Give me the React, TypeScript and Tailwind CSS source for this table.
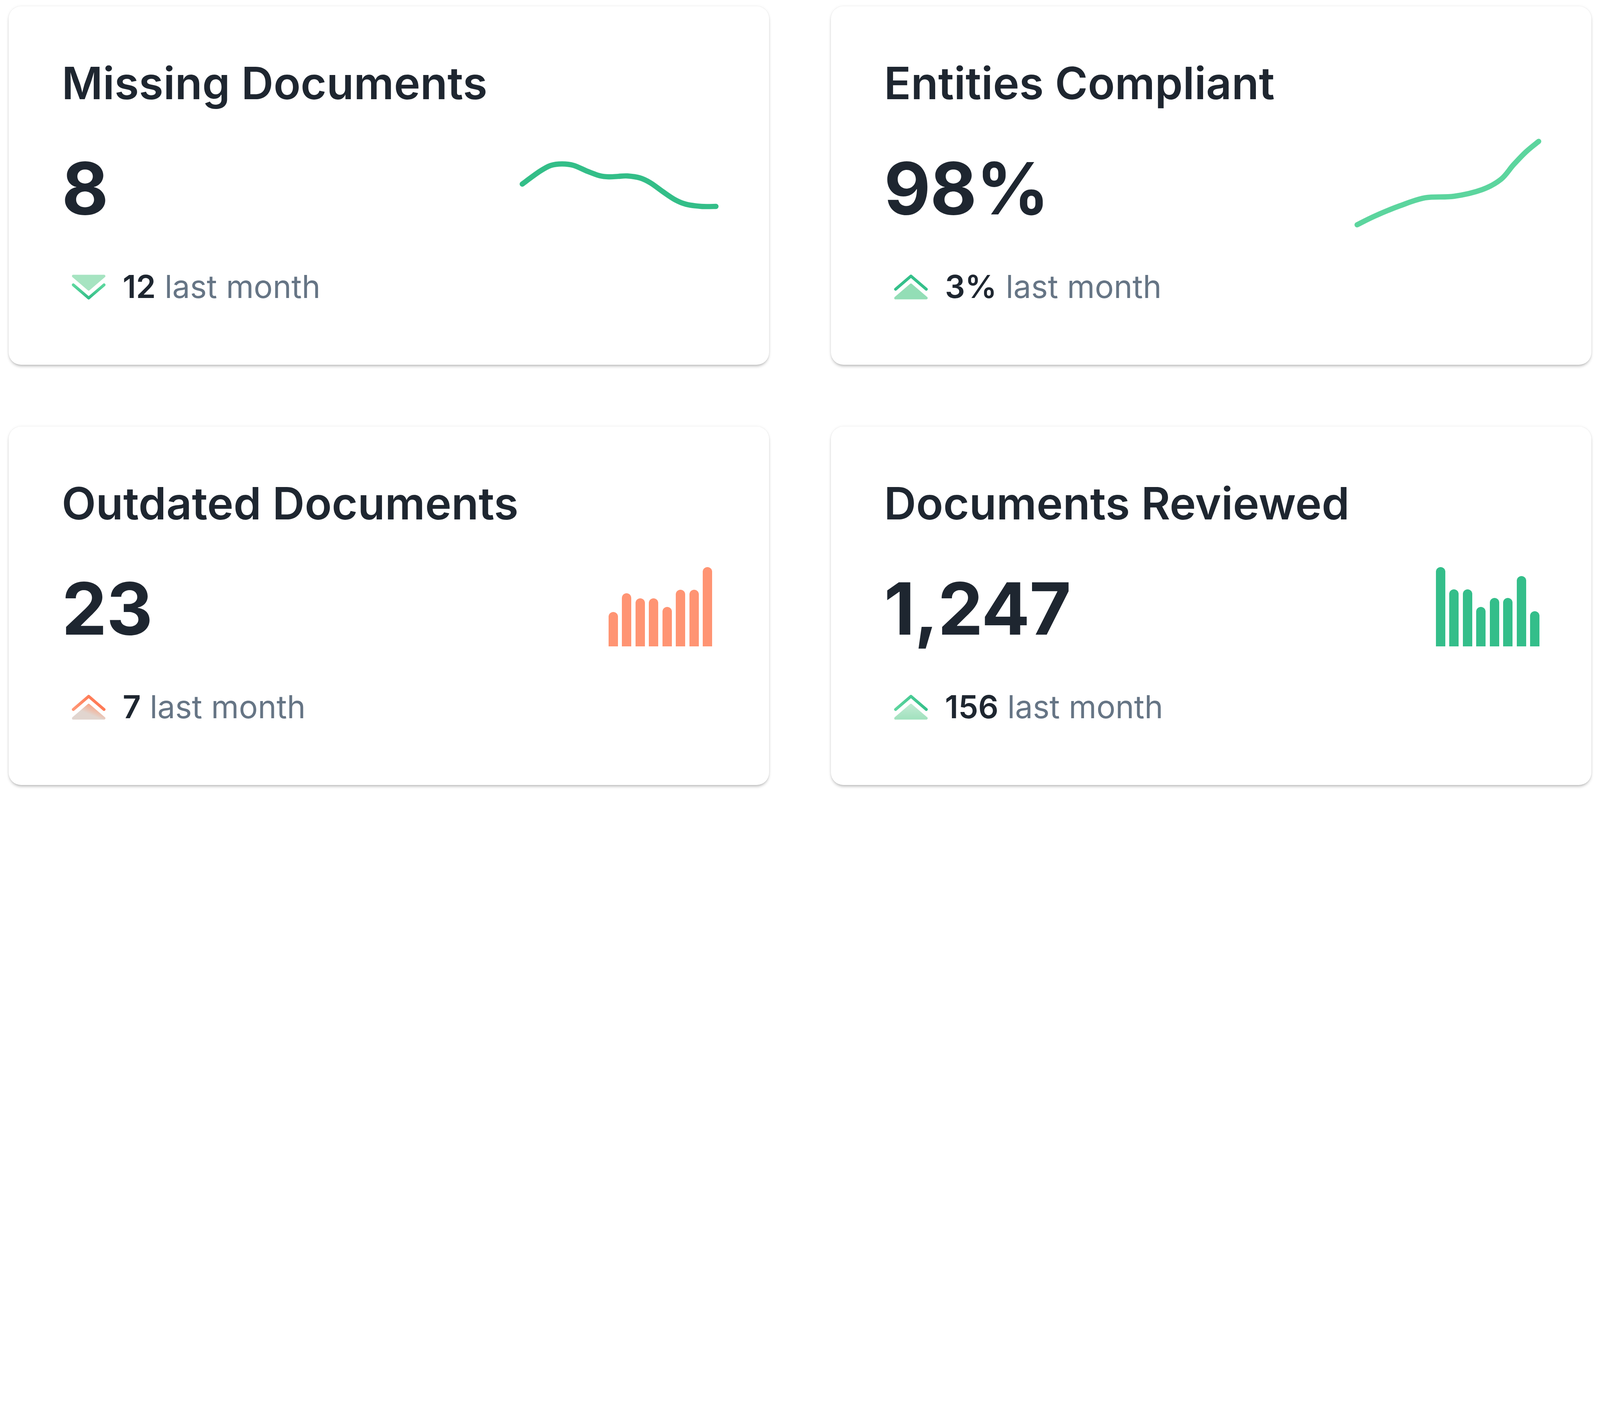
import type { ReactNode } from 'react';

type Pt = [number, number];

// Catmull-Rom through the points, as cubic bezier segments
function smoothPath(pts: Pt[]): string {
  let d = `M${pts[0][0]} ${pts[0][1]}`;
  for (let i = 0; i < pts.length - 1; i++) {
    const p0 = pts[i - 1] || pts[i];
    const p1 = pts[i];
    const p2 = pts[i + 1];
    const p3 = pts[i + 2] || p2;
    const c1x = p1[0] + (p2[0] - p0[0]) / 6;
    const c1y = p1[1] + (p2[1] - p0[1]) / 6;
    const c2x = p2[0] - (p3[0] - p1[0]) / 6;
    const c2y = p2[1] - (p3[1] - p1[1]) / 6;
    d += ` C${c1x.toFixed(1)} ${c1y.toFixed(1)} ${c2x.toFixed(1)} ${c2y.toFixed(1)} ${p2[0]} ${p2[1]}`;
  }
  return d;
}

const missingPts: Pt[] = [
  [16, 111], [96, 53], [146, 26], [198, 19], [251, 26], [314, 53], [370, 73], [412, 78],
  [454, 76], [496, 74], [553, 83], [602, 106], [658, 146], [714, 183], [763, 203], [833, 213], [900, 213],
];

const compliantPts: Pt[] = [
  [14, 405], [95, 365], [210, 318], [324, 282], [456, 275], [583, 245], [669, 198], [726, 132], [784, 72], [841, 25],
];

function LineChart({ points, vw, vh, width, height, color }: { points: Pt[]; vw: number; vh: number; width: number; height: number; color: string }) {
  return (
    <svg width={width} height={height} viewBox={`0 0 ${vw} ${vh}`} fill="none">
      <path d={smoothPath(points)} stroke={color} strokeWidth={24} strokeLinecap="round" strokeLinejoin="round" />
    </svg>
  );
}

function BarChart({ values, color }: { values: number[]; color: string }) {
  return (
    <div className="flex h-[203px] items-end gap-[10.5px]">
      {values.map((h, i) => (
        <div key={i} className={`w-[24px] rounded-t-full ${color}`} style={{ height: h }} />
      ))}
    </div>
  );
}

type Tone = 'downGreen' | 'upGreen' | 'upGreenSoft' | 'upOrange';

function TrendIcon({ tone }: { tone: Tone }) {
  const id = `g-${tone}`;
  if (tone === 'downGreen') {
    return (
      <svg width={90} height={68} viewBox="0 0 160 120" fill="none">
        <defs>
          <linearGradient id={id} x1="0" y1="0" x2="0" y2="1">
            <stop offset="0" stopColor="#5dd89f" />
            <stop offset="1" stopColor="#33bd88" />
          </linearGradient>
        </defs>
        <path d="M10 10 L80 70 L150 10 Z" fill="#a6e4c1" stroke="#a6e4c1" strokeWidth={12} strokeLinejoin="round" />
        <path d="M10 50 L80 110 L150 50" stroke={`url(#${id})`} strokeWidth={13} strokeLinecap="round" strokeLinejoin="round" />
      </svg>
    );
  }
  const chevron = tone === 'upGreen' ? '#34c08a' : `url(#${id}-c)`;
  const tri = tone === 'upGreen' ? '#93deb6' : `url(#${id}-t)`;
  return (
    <svg width={90} height={68} viewBox="0 0 160 120" fill="none">
      <defs>
        {tone === 'upOrange' ? (
          <>
            <linearGradient id={`${id}-c`} x1="0" y1="0" x2="1" y2="0">
              <stop offset="0" stopColor="#ff9877" />
              <stop offset="0.5" stopColor="#ff7d58" />
              <stop offset="1" stopColor="#ff7a55" />
            </linearGradient>
            <linearGradient id={`${id}-t`} x1="0.2" y1="1" x2="0.9" y2="0.3">
              <stop offset="0.45" stopColor="#e1d5cf" />
              <stop offset="1" stopColor="#f8a889" />
            </linearGradient>
          </>
        ) : (
          <>
            <linearGradient id={`${id}-c`} x1="0" y1="0" x2="1" y2="0">
              <stop offset="0" stopColor="#5dd59e" />
              <stop offset="1" stopColor="#34c08a" />
            </linearGradient>
            <linearGradient id={`${id}-t`} x1="0" y1="0" x2="0" y2="1">
              <stop offset="0" stopColor="#bfead2" />
              <stop offset="1" stopColor="#a3e2bf" />
            </linearGradient>
          </>
        )}
      </defs>
      <path d="M10 110 L80 50 L150 110 Z" fill={tri} stroke={tri} strokeWidth={12} strokeLinejoin="round" />
      <path d="M10 70 L80 10 L150 70" stroke={chevron} strokeWidth={13} strokeLinecap="round" strokeLinejoin="round" />
    </svg>
  );
}

interface StatCardProps {
  title: string;
  value: string;
  delta: string;
  tone: Tone;
  chart: ReactNode;
  chartClass: string;
}

function StatCard({ title, value, delta, tone, chart, chartClass }: StatCardProps) {
  return (
    <div className="flex h-[918px] flex-col rounded-[32px] bg-white pl-[136px] pt-[140px] shadow-[0_0_0_1px_rgba(0,0,0,0.035),0_0_8px_rgba(0,0,0,0.06),0_6px_8px_-3px_rgba(0,0,0,0.28)]">
      <h2 className="whitespace-nowrap text-[114px] font-semibold leading-none text-[#1e2630]">{title}</h2>
      <div className="mt-[120px] flex h-[184px] items-start justify-between">
        <div className="text-[184px] font-bold leading-none tracking-[-1.5px] text-[#1e2630]">{value}</div>
        <div className={chartClass}>{chart}</div>
      </div>
      <div className="mt-[120px] flex items-center">
        <div className="ml-[24px]">
          <TrendIcon tone={tone} />
        </div>
        <p className="ml-[42px] whitespace-nowrap text-[81px] leading-none">
          <span className="font-semibold text-[#1e2630]">{delta}</span>
          <span className="text-[#667585]"> last month</span>
        </p>
      </div>
    </div>
  );
}

export default function App() {
  return (
    <div className="w-full bg-white px-[22px] pb-[32px] pt-[16px] font-['Inter',sans-serif]">
      <div className="grid grid-cols-2 gap-x-[158px] gap-y-[158px]">
        <StatCard
          title="Missing Documents"
          value="8"
          delta="12"
          tone="downGreen"
          chartClass="mr-[124px] mt-[19px]"
          chart={<LineChart points={missingPts} vw={920} vh={230} width={518} height={129} color="#33be88" />}
        />
        <StatCard
          title="Entities Compliant"
          value="98%"
          delta="3%"
          tone="upGreen"
          chartClass="mr-[124px] -mt-[42px]"
          chart={<LineChart points={compliantPts} vw={860} vh={420} width={484} height={236} color="#5cd59e" />}
        />
        <StatCard
          title="Outdated Documents"
          value="23"
          delta="7"
          tone="upOrange"
          chartClass="mr-[146px] -mt-[14px]"
          chart={<BarChart values={[88, 136, 123, 123, 101, 145, 145, 203]} color="bg-[#ff9473]" />}
        />
        <StatCard
          title="Documents Reviewed"
          value="1,247"
          delta="156"
          tone="upGreenSoft"
          chartClass="mr-[133px] -mt-[14px]"
          chart={<BarChart values={[203, 146, 146, 101, 124, 124, 180, 90]} color="bg-[#34be8a]" />}
        />
      </div>
    </div>
  );
}
